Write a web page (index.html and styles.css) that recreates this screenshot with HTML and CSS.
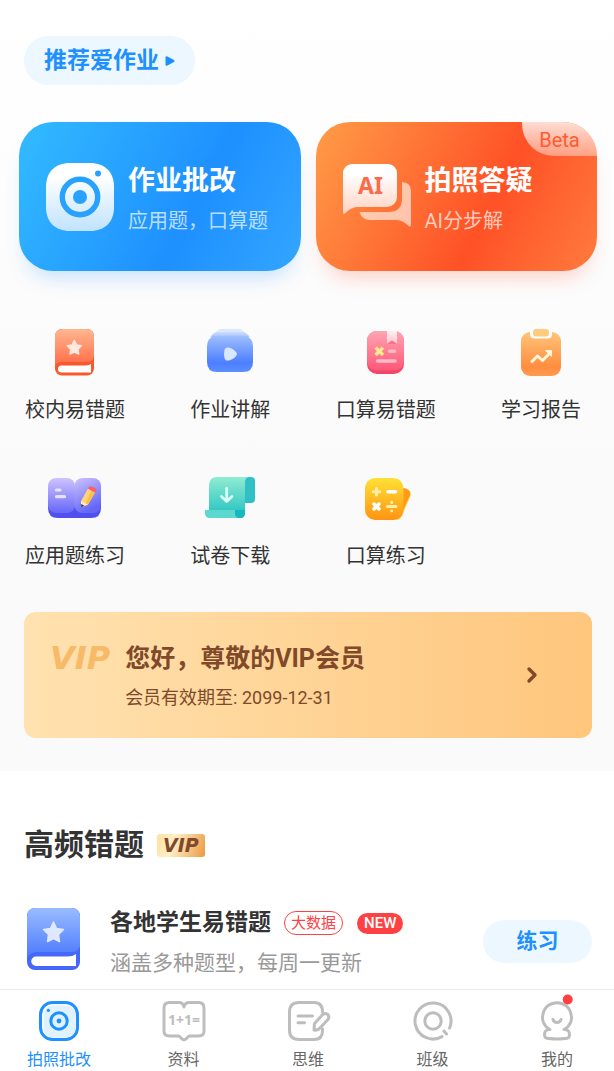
FILE: index.html
```html
<!DOCTYPE html>
<html lang="zh-CN">
<head>
<meta charset="utf-8">
<meta name="viewport" content="width=device-width, initial-scale=1">
<title>爱作业</title>
<link rel="stylesheet" href="styles.css">
</head>
<body>
<main>
  <section class="home">
    <a class="recommend" href="#recommend">推荐爱作业
      <svg class="recommend-arrow" width="10" height="12" viewBox="0 0 10 12" aria-hidden="true"><path d="M1.500 2.200v7.600L8.500 6z" fill="#1e90ff" stroke="#1e90ff" stroke-width="2" stroke-linejoin="round"/></svg>
    </a>

    <div class="heroes">
      <a class="hero hero-blue" href="#check">
        <svg class="hero-icon" viewBox="0 0 68 68" aria-hidden="true">
          <defs><linearGradient id="cam" x1="0" y1="0" x2="0" y2="1"><stop offset=".2" stop-color="#fff"/><stop offset="1" stop-color="#c0e3ff"/></linearGradient></defs>
          <path d="M24 0H44C59 0 68 9 68 24V44C68 59 59 68 44 68H24C9 68 0 59 0 44V24C0 9 9 0 24 0Z" fill="url(#cam)"/>
          <circle cx="34" cy="34" r="17.700" fill="none" stroke="#28a1ff" stroke-width="5.400"/>
          <circle cx="34" cy="34" r="7" fill="#28a1ff"/><circle cx="52" cy="10.500" r="3" fill="#28a1ff"/>
        </svg>
        <span class="hero-text"><strong class="hero-title">作业批改</strong><span class="hero-sub">应用题，口算题</span></span>
      </a>
      <a class="hero hero-orange" href="#ask">
        <svg class="hero-icon" viewBox="0 0 68 68" aria-hidden="true">
          <defs><linearGradient id="bub" x1="0" y1="0" x2="0" y2="1"><stop offset=".2" stop-color="#fff"/><stop offset="1" stop-color="#ffd2c2"/></linearGradient></defs>
          <path d="M59 19Q68 19.500 68 28V62Q67.500 65 64.500 62Q59 57 53 57H27Q19 57 16.500 49H45Q59 49 59 36Z" fill="#fff" fill-opacity=".6"/>
          <path d="M9 1H45A9 9 0 0 1 54 10V34A10 10 0 0 1 44 44H15Q9 44 4 48.500Q0 53 0 49V10A9 9 0 0 1 9 1Z" fill="url(#bub)"/>
          <text x="27.500" y="31" class="ai-text">AI</text>
        </svg>
        <span class="hero-text"><strong class="hero-title">拍照答疑</strong><span class="hero-sub">AI分步解</span></span>
        <span class="beta">Beta</span>
      </a>
    </div>

    <nav class="tools" aria-label="功能">
      <a class="tool" href="#t1">
        <svg class="tool-icon" viewBox="0 0 54 54" aria-hidden="true">
          <defs><linearGradient id="g1" x1="0" y1="0" x2="0" y2="1"><stop stop-color="#ffb791"/><stop offset="1" stop-color="#ff6b45"/></linearGradient></defs>
          <rect x="7" y="3" width="39" height="46.500" rx="7" fill="#f9582c"/>
          <path d="M15 3H38Q46 3 46 11V30Q45 36 39 36H14Q9 36 7 40V11Q7 3 15 3Z" fill="url(#g1)"/>
          <path d="M13.500 39.500H37Q40.500 39.500 43 38V46.500H13.500A3.500 3.500 0 0 1 13.500 39.500Z" fill="#fff"/>
          <path d="M26.300 14.500L28.700 19L33.300 19.800L30 23.300L30.700 28L26.300 26L22 28L22.700 23.300L19.300 19.800L24 19Z" fill="#ffe8de" stroke="#ffe8de" stroke-width="1.500" stroke-linejoin="round"/>
        </svg>校内易错题</a>
      <a class="tool" href="#t2">
        <svg class="tool-icon" viewBox="0 0 54 54" aria-hidden="true">
          <defs><linearGradient id="g2" x1="0" y1="0" x2="0" y2="1"><stop stop-color="#9fc0ff"/><stop offset=".75" stop-color="#4c7eff"/><stop offset="1" stop-color="#5c8fff"/></linearGradient></defs>
          <path d="M18 3H36Q39.500 3 42 7H12Q15 3 18 3Z" fill="#dbe6ff"/><path d="M12 6.500H42Q45 8 47 11H7Q9 8 12 6.500Z" fill="#bfd3ff"/>
          <path d="M10 9.500H44L48 13.500Q50 16 50 20V36Q50 46 40 46H14Q4 46 4 36V20Q4 16 6 13.500Z" fill="url(#g2)"/>
          <path d="M21.500 24Q22 21 26 21.500Q33 24 34 28Q33 32 26 34.500Q22 35 21.500 32Q20.500 28 21.500 24Z" fill="#dbe6ff"/>
        </svg>作业讲解</a>
      <a class="tool" href="#t3">
        <svg class="tool-icon" viewBox="0 0 54 54" aria-hidden="true">
          <defs><linearGradient id="g3" x1="0" y1="0" x2="0" y2="1"><stop stop-color="#ffa5b2"/><stop offset="1" stop-color="#ff5778"/></linearGradient><linearGradient id="g3b" x1="0" y1="0" x2="0" y2="1"><stop stop-color="#fff0f2"/><stop offset="1" stop-color="#ffc1ca"/></linearGradient></defs>
          <rect x="8" y="5" width="37" height="43" rx="10" fill="#f34767"/><rect x="8" y="5" width="37" height="39.500" rx="9" fill="url(#g3)"/>
          <path d="M28 5H38V18L33 14.500L28 18Z" fill="url(#g3b)"/><path d="M28 18L33 14.500L38 18Z" fill="#f8708a"/>
          <path d="M17.800 22.800L22.800 27.800M22.800 22.800L17.800 27.800" stroke="#ffe98f" stroke-width="3.400" stroke-linecap="square"/>
          <path d="M30.500 25.300H35.500M18.500 35H36" stroke="#ffb9c7" stroke-width="3.400" stroke-linecap="round"/>
        </svg>口算易错题</a>
      <a class="tool" href="#t4">
        <svg class="tool-icon" viewBox="0 0 54 54" aria-hidden="true">
          <defs><linearGradient id="g4" x1="0" y1="0" x2="0" y2="1"><stop stop-color="#ffc579"/><stop offset=".8" stop-color="#ff8d40"/><stop offset="1" stop-color="#ff9b50"/></linearGradient></defs>
          <rect x="7" y="6" width="40" height="44" rx="9" fill="url(#g4)"/>
          <path d="M16 5H38V8Q38 12.500 33 12.500H21Q16 12.500 16 8Z" fill="#fff"/><rect x="19" y="3" width="16" height="7.500" rx="3" fill="#ffcc7d"/>
          <path d="M18 35.500L23.500 30L28.500 34.500L35 28" fill="none" stroke="#fff7d8" stroke-width="3" stroke-linecap="round" stroke-linejoin="round"/><path d="M31.500 24.500H37.500V30.500Z" fill="#fff7d8" stroke="#fff7d8" stroke-linejoin="round"/>
        </svg>学习报告</a>
      <a class="tool" href="#t5">
        <svg class="tool-icon" viewBox="0 0 54 54" aria-hidden="true">
          <defs><linearGradient id="g5" x1="0" y1="0" x2="0" y2="1"><stop stop-color="#cfc3ff"/><stop offset="1" stop-color="#6668f7"/></linearGradient><linearGradient id="g5b" x1="0" y1="0" x2=".4" y2="1"><stop stop-color="#cfc3ff"/><stop offset="1" stop-color="#6467f6"/></linearGradient></defs>
          <path d="M0 20H53V36Q53 46 43 46H10Q0 46 0 36Z" fill="#5150ee"/>
          <rect x="0" y="6" width="27" height="35" rx="8" fill="url(#g5)"/><rect x="26.500" y="6" width="26.500" height="35" rx="8" fill="url(#g5b)"/>
          <path d="M8.500 18H12M8.500 24.700H16.500" stroke="#e7e1ff" stroke-width="3.200" stroke-linecap="round"/>
          <path d="M33 29L40 16.500L47 20.500L40 32.500L34.500 34.500Z" fill="#ffd477"/><path d="M43.500 18.500L47 20.500L40 32.500L37.500 32Z" fill="#ffbd45"/>
          <path d="M40 16.500L41.500 14.500Q43 14 46 15.500Q49 17.500 48.500 18.500L47 20.500Z" fill="#ff5d61"/>
          <path d="M33 29L40 32.500L34.500 35Q33 34.500 33 33Z" fill="#ffe8c2"/><path d="M33 32L36.500 33.800L33.500 35.200Z" fill="#383456"/>
        </svg>应用题练习</a>
      <a class="tool" href="#t6">
        <svg class="tool-icon" viewBox="0 0 54 54" aria-hidden="true">
          <defs><linearGradient id="g6" x1="0" y1="0" x2="0" y2="1"><stop stop-color="#90ecd0"/><stop offset="1" stop-color="#20bfc3"/></linearGradient></defs>
          <path d="M42 9Q42 5 46 5H48Q52 5 52 9V27Q52 31 48 31H42Z" fill="#2fbfc4"/>
          <path d="M14 5H46Q42 5 42 10V41Q42 46 37 46H6V14Q6 5 14 5Z" fill="url(#g6)"/>
          <path d="M2 38H32V41Q32 46 37 46H7Q2 46 2 41Z" fill="#5dd8ce"/><path d="M32 38H42V41Q42 46 37 46Q32 46 32 41Z" fill="#15b8bf"/>
          <path d="M23.700 16.500V29M18.500 24.500L23.700 29.500L29 24.500" fill="none" stroke="#d7fff4" stroke-width="2.800" stroke-linecap="round" stroke-linejoin="round"/>
        </svg>试卷下载</a>
      <a class="tool" href="#t7">
        <svg class="tool-icon" viewBox="0 0 54 54" aria-hidden="true">
          <defs><linearGradient id="g7" x1="0" y1="0" x2="0" y2="1"><stop stop-color="#ffe136"/><stop offset="1" stop-color="#ff9412"/></linearGradient></defs>
          <path d="M44 16Q53 17 51.500 24L43 44Q41 48 36 48Z" fill="#ffd34a"/><path d="M44 16Q52 17 51 23L42 43Z" fill="#ff9a16"/>
          <rect x="6" y="6" width="38.500" height="42" rx="10" fill="url(#g7)"/>
          <g stroke="#ffefa5" stroke-width="3" stroke-linecap="round"><path d="M17.500 16.500V23M14.200 19.700H20.800M28.500 34.500H37M32.700 30.300V30.400M32.700 38.700V38.800"/></g>
          <g stroke="#fff" stroke-width="3.500" stroke-linecap="round"><path d="M28.800 19.700H36.500M15 32L20 37M20 32L15 37"/></g>
        </svg>口算练习</a>
    </nav>

    <a class="member" href="#vip">
      <span class="member-logo">VIP</span>
      <span class="member-text"><strong class="member-title">您好，尊敬的VIP会员</strong><span class="member-date">会员有效期至: 2099-12-31</span></span>
      <svg class="member-arrow" viewBox="0 0 12 18" aria-hidden="true"><path d="M3 3L9 9L3 15" fill="none" stroke="#80492a" stroke-width="3.400" stroke-linecap="round" stroke-linejoin="round"/></svg>
    </a>
  </section>

  <section class="mistakes">
    <h2 class="heading">高频错题 <span class="vip-badge">VIP</span></h2>
    <article class="entry">
      <svg class="entry-icon" viewBox="0 0 54 66" aria-hidden="true">
        <defs><linearGradient id="g8" x1="0" y1="0" x2="0" y2="1"><stop stop-color="#99bcff"/><stop offset="1" stop-color="#4b79ff"/></linearGradient></defs>
        <rect width="53" height="62" rx="8" fill="#4668fa"/>
        <path d="M9 0H44Q53 0 53 9V38Q51 44 45 44H10Q3 44 0 50V9Q0 0 9 0Z" fill="url(#g8)"/>
        <path d="M9 48.500H40Q46 48.500 49 46V58H9A4.750 4.750 0 0 1 9 48.500Z" fill="#fff"/>
        <path d="M26.500 14L29.500 20.500L36.500 21.500L31.500 26.500L32.500 33.500L26.500 30.500L20.500 33.500L21.500 26.500L16.500 21.500L23.500 20.500Z" fill="#dfe8ff" stroke="#dfe8ff" stroke-width="1.500" stroke-linejoin="round"/>
      </svg>
      <div class="entry-text">
        <div class="entry-top"><h3 class="entry-title">各地学生易错题</h3><span class="tag">大数据</span><span class="new">NEW</span></div>
        <p class="entry-sub">涵盖多种题型，每周一更新</p>
      </div>
      <button class="practice" type="button">练习</button>
    </article>
  </section>
</main>

<nav class="tabs" aria-label="主导航">
  <a class="tab tab-active" href="#home" aria-current="page">
    <svg class="tab-icon" viewBox="0 0 44 44" aria-hidden="true"><rect x="3.500" y="3.500" width="37" height="37" rx="12" fill="#fff" stroke="#1e90ff" stroke-width="3"/><rect x="6.500" y="6.500" width="32" height="32" rx="9" fill="#e0f2ff"/><circle cx="22" cy="22" r="8.200" fill="none" stroke="#1e90ff" stroke-width="3"/><circle cx="22" cy="22" r="2.400" fill="#1e90ff"/><circle cx="11.400" cy="11.400" r="1.600" fill="#1e90ff"/></svg>拍照批改</a>
  <a class="tab" href="#data">
    <svg class="tab-icon" viewBox="0 0 44 44" aria-hidden="true"><path d="M7.500 3.500H17Q21 3.500 22 8Q23 3.500 27 3.500H36.500Q42 3.500 42 9V32Q42 37 36.500 37H28Q26 37 25 39Q22 42.500 19 39Q18 37 16 37H7.500Q2 37 2 32V9Q2 3.500 7.500 3.500Z" class="line"/><text x="22" y="25.500" class="sum-text">1+1=</text></svg>资料</a>
  <a class="tab" href="#think">
    <svg class="tab-icon" viewBox="0 0 44 44" aria-hidden="true"><path d="M36.500 13Q36.500 3.500 28 3.500H13Q3.500 3.500 3.500 13V31Q3.500 40.500 13 40.500H28Q36.500 40.500 36.500 32V30M12 17H26.500M12 23.700H18.500M28.500 24.500L36.500 15.800Q39 13.500 41.800 15.500Q44 18.500 41.500 21L33 30Q31 31.500 28 31Z" class="line"/></svg>思维</a>
  <a class="tab" href="#class">
    <svg class="tab-icon" viewBox="0 0 44 44" aria-hidden="true"><path d="M38.600 29A18 18 0 1 0 31 37.600M33 32L35.500 35" class="line"/><circle cx="22" cy="22" r="8.200" class="line"/></svg>班级</a>
  <a class="tab" href="#me">
    <svg class="tab-icon" viewBox="0 0 44 44" aria-hidden="true"><path d="M15 30.500C8 27 7 20 7.700 16.500C9 8 15 3.700 22 3.700S35 8 36.300 16.500C37 20 36 27 29 30.500C34 30.500 34.500 33 34.500 36Q34.500 39.500 30 39.500Q22 40.500 14 39.500Q9.500 39.500 9.500 36C9.500 33 10 30.500 15 30.500ZM18 20.500Q19 23.500 22 23.500T26 20.500" class="line"/><circle cx="32.700" cy="0.500" r="5" fill="#ff3f42"/></svg>我的</a>
</nav>
</body>
</html>
```
FILE: styles.css
```css
* { box-sizing: border-box; }

body {
  margin: 0;
  min-height: 100vh;
  display: flex;
  flex-direction: column;
  background: #fff;
  color: #333;
  font-family: Roboto, "Noto Sans CJK SC", sans-serif;
}

main { flex: 1; }
a { color: inherit; text-decoration: none; }
h2, h3, p { margin: 0; }
svg { display: block; flex: none; }

.home {
  padding: 36px 0 33px;
  background: linear-gradient(#fff, #fafafa 60%);
}

.recommend {
  display: flex;
  align-items: center;
  gap: 6px;
  width: max-content;
  height: 49px;
  margin-left: 24px;
  padding: 0 20px;
  border-radius: 25px;
  background: #ecf7ff;
  color: #1e90ff;
  font-size: 23px;
  font-weight: 700;
  line-height: 34px;
}

.heroes {
  display: grid;
  grid-template-columns: 1fr 1fr;
  gap: 15px;
  margin: 37px 17px 0 19px;
}

.hero {
  position: relative;
  display: flex;
  align-items: center;
  gap: 14px;
  height: 149px;
  padding-left: 27px;
  border-radius: 34px;
  color: #fff;
}

.hero-blue {
  background: linear-gradient(118deg, #33bbff, #1e90ff 61%, #33a6ff);
  box-shadow: 0 14px 20px -8px rgba(30, 144, 255, .25);
}

.hero-orange {
  background: linear-gradient(118deg, #ff9c48, #ff5126 61%, #ff7b3e);
  box-shadow: 0 14px 20px -8px rgba(255, 81, 38, .25);
}

.hero-icon { width: 68px; height: 68px; }
.ai-text { font: 700 23px "Noto Sans", sans-serif; fill: #fb6a4a; text-anchor: middle; }
.hero-text { display: flex; flex-direction: column; gap: 5px; padding-top: 4px; white-space: nowrap; }
.hero-title { font-size: 27px; font-weight: 700; line-height: 40px; }
.hero-sub { font-size: 20px; line-height: 30px; color: rgba(255, 255, 255, .7); }

.beta {
  position: absolute;
  top: 0;
  right: 0;
  width: 75px;
  height: 34px;
  border-radius: 0 34px 0 32px;
  background: linear-gradient(rgba(255, 255, 255, .8), rgba(255, 255, 255, .4));
  color: #ff5a30;
  font-size: 20px;
  line-height: 36px;
  text-align: center;
}

.tools {
  display: grid;
  grid-template-columns: repeat(4, 100px);
  justify-content: space-between;
  row-gap: 48px;
  padding: 55px 23px 0 25px;
}

.tool {
  display: flex;
  flex-direction: column;
  align-items: center;
  gap: 16px;
  font-size: 20px;
  line-height: 28px;
  white-space: nowrap;
}

.tool-icon { width: 54px; height: 54px; }

.member {
  display: flex;
  align-items: center;
  gap: 15px;
  height: 126px;
  margin: 42px 22px 0 24px;
  padding: 0 54px 0 26px;
  border-radius: 12px;
  background: linear-gradient(90deg, #ffe2b0, #ffc67d);
  color: #80492a;
}

.member-logo {
  align-self: flex-start;
  padding-top: 27px;
  color: #f8b968;
  font: italic 700 32px/38px "DejaVu Sans", sans-serif;
}

.member-text { display: flex; flex: 1; flex-direction: column; gap: 7px; padding-top: 2px; }
.member-title { font-size: 25px; font-weight: 700; line-height: 36px; }
.member-date { font-size: 18px; line-height: 28px; }
.member-arrow { width: 12px; height: 18px; }

.mistakes { padding: 52px 22px 10px 24px; }

.heading {
  display: flex;
  align-items: center;
  gap: 13px;
  font-size: 30px;
  font-weight: 700;
  line-height: 44px;
}

.vip-badge {
  padding: 0 6px;
  border-radius: 3px;
  background: linear-gradient(110deg, #ffe0a0, #fff0c8 35%, #ed983e);
  color: #80492a;
  font: italic 700 19px/23px "DejaVu Sans", sans-serif;
}

.entry {
  display: flex;
  align-items: center;
  margin-top: 38px;
  padding-left: 3px;
}

.entry-icon { width: 54px; height: 66px; margin-bottom: 2px; }
.entry-text { flex: 1; margin-left: 29px; padding-top: 2px; white-space: nowrap; }
.entry-top { display: flex; align-items: center; height: 32px; }
.entry-title { font-size: 23px; font-weight: 700; line-height: 32px; }

.tag {
  margin-left: 13px;
  padding: 0 6px;
  border: 1px solid #ff4144;
  border-radius: 12px;
  color: #ff4144;
  font-size: 15px;
  line-height: 22px;
}

.new {
  margin-left: 14px;
  padding: 0 7px;
  border-radius: 11px;
  background: #ff4144;
  color: #fff;
  font-size: 15px;
  font-weight: 500;
  line-height: 21px;
}

.entry-sub { margin-top: 8px; color: #999; font-size: 21px; line-height: 32px; }

.practice {
  width: 109px;
  height: 43px;
  margin-bottom: 2px;
  padding: 0;
  border: 0;
  border-radius: 22px;
  background: #ecf7ff;
  color: #1e90ff;
  font: 700 21px/43px Roboto, "Noto Sans CJK SC", sans-serif;
}

.tabs {
  position: sticky;
  bottom: 0;
  display: grid;
  grid-template-columns: repeat(5, 66px);
  justify-content: space-between;
  padding: 9px 24px 0 26px;
  border-top: 1px solid #ececec;
  background: #fff;
}

.tab {
  display: flex;
  flex-direction: column;
  align-items: center;
  gap: 6px;
  color: #666;
  font-size: 16px;
  line-height: 22px;
  white-space: nowrap;
}

.tab-active { color: #1e90ff; }
.tab-icon { width: 44px; height: 44px; overflow: visible; }
.line { fill: none; stroke: #bdbdbd; stroke-width: 3; stroke-linecap: round; stroke-linejoin: round; }
.sum-text { font: 700 14px "Noto Sans", sans-serif; fill: #bdbdbd; text-anchor: middle; }
```
